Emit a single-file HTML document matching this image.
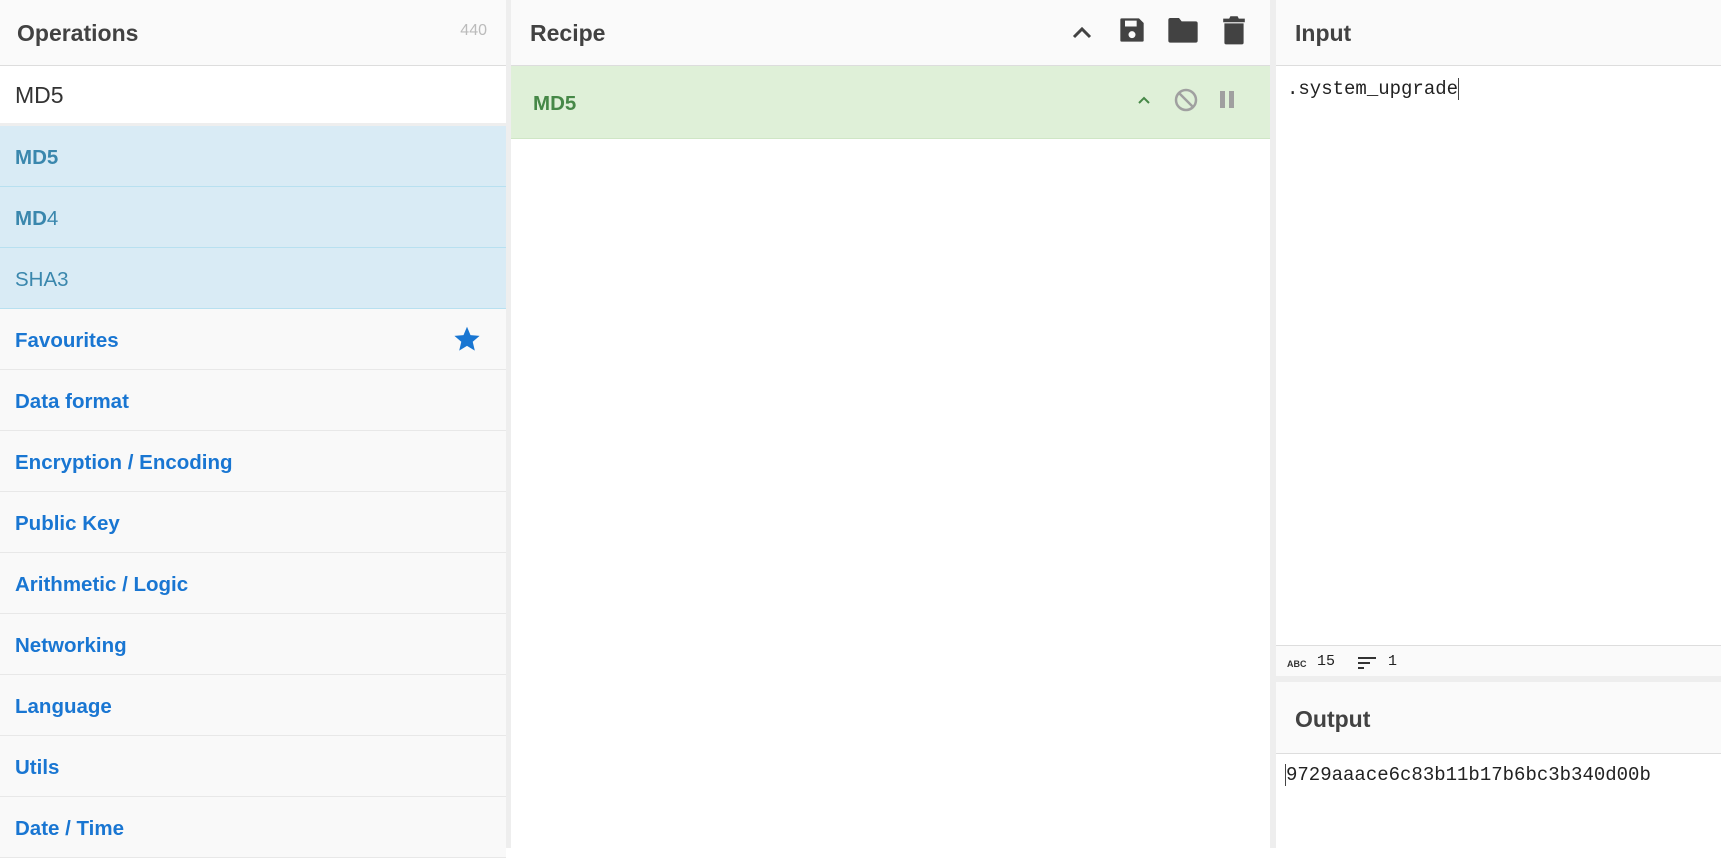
<!DOCTYPE html>
<html><head><meta charset="utf-8"><style>
*{box-sizing:border-box;margin:0;padding:0}
body{width:1721px;height:848px;overflow:hidden;background:#fff;font-family:"Liberation Sans",sans-serif;position:relative}
.abs{position:absolute}
.hdr{background:#fafafa;border-bottom:1px solid #ddd;height:66px}
.htitle{position:absolute;top:20px;font-weight:bold;font-size:23px;color:#424242}
.gut{background:#eee}
.row{position:absolute;left:0;width:506px;height:61px;border-bottom:1px solid #e8e8e8;background:#f9f9f9;font-size:20.5px;font-weight:bold;color:#1976d2;padding:20px 0 0 15px}
.sel{background:#d9ebf5;border-bottom:1px solid #b8e0f0;color:#3a87ad}
.mono{font-family:"Liberation Mono",monospace;font-size:19px;color:#222}
</style></head><body>
<div class="abs hdr" style="left:0;top:0;width:506px"><span class="htitle" style="left:17px">Operations</span><span class="abs" style="right:19px;top:22px;font-size:16px;color:#bbb">440</span></div>
<div class="abs" style="left:0;top:66px;width:506px;height:57px;background:#fff;font-size:23px;color:#333;padding:16px 0 0 15px">MD5</div>
<div class="abs" style="left:0;top:123px;width:506px;height:3px;background:#eee"></div>
<div class="row sel" style="top:126px">MD5</div>
<div class="row sel" style="top:187px">MD<span style="font-weight:normal">4</span></div>
<div class="row sel" style="top:248px;font-weight:normal">SHA3</div>
<div class="row" style="top:309px">Favourites<svg class="abs" style="left:452px;top:16px" width="30" height="28" viewBox="0 0 24 24"><path fill="#1976d2" d="M12 1.5l3 7.2 7.8.6-5.9 5.1 1.8 7.6L12 17.9 5.3 22l1.8-7.6L1.2 9.3 9 8.7z"/></svg></div>
<div class="row" style="top:370px">Data format</div>
<div class="row" style="top:431px">Encryption / Encoding</div>
<div class="row" style="top:492px">Public Key</div>
<div class="row" style="top:553px">Arithmetic / Logic</div>
<div class="row" style="top:614px">Networking</div>
<div class="row" style="top:675px">Language</div>
<div class="row" style="top:736px">Utils</div>
<div class="row" style="top:797px">Date / Time</div>
<div class="abs gut" style="left:506px;top:0;width:5px;height:848px"></div>
<div class="abs hdr" style="left:511px;top:0;width:759px"><span class="htitle" style="left:19px">Recipe</span>
<svg class="abs" style="left:559px;top:24px" width="24" height="16" viewBox="0 0 24 16"><path d="M4 13l8-8 8 8" fill="none" stroke="#424242" stroke-width="3"/></svg>
<svg class="abs" style="left:607px;top:16px" width="28" height="28" viewBox="0 0 24 24"><path fill="#424242" fill-rule="evenodd" d="M3 2h15l4 4v15a1 1 0 0 1-1 1H3a1 1 0 0 1-1-1V3a1 1 0 0 1 1-1zm3 2v5h10V4zm6 9a3 3 0 1 0 0 6 3 3 0 0 0 0-6z"/></svg>
<svg class="abs" style="left:656px;top:16px" width="32" height="28" viewBox="0 0 24 21"><path fill="#424242" d="M1 3a1.5 1.5 0 0 1 1.5-1.5H9l2 2.5h10.5A1.5 1.5 0 0 1 23 5.5v13a1.5 1.5 0 0 1-1.5 1.5h-19A1.5 1.5 0 0 1 1 18.5z"/></svg>
<svg class="abs" style="left:711px;top:15px" width="24" height="30" viewBox="0 0 20 25"><path fill="#424242" d="M1 3h5l1-2h6l1 2h5v3H1zm1 4h16v16a1.5 1.5 0 0 1-1.5 1.5h-13A1.5 1.5 0 0 1 2 23z"/></svg>
</div>
<div class="abs" style="left:511px;top:66px;width:759px;height:73px;background:#dff0d8;border-bottom:1px solid #cfe6c5">
<span class="abs" style="left:22px;top:26px;font-size:20.5px;font-weight:bold;color:#468847">MD5</span>
<svg class="abs" style="left:625px;top:28px" width="16" height="12" viewBox="0 0 16 12"><path d="M3 9l5-5 5 5" fill="none" stroke="#468847" stroke-width="2"/></svg>
<svg class="abs" style="left:662px;top:21px" width="26" height="26" viewBox="0 0 26 26"><circle cx="13" cy="13" r="10" fill="none" stroke="#a0a0a0" stroke-width="2.5"/><path d="M6 6l14 14" stroke="#a0a0a0" stroke-width="2.5"/></svg>
<div class="abs" style="left:709px;top:25px;width:5px;height:17px;background:#a0a0a0"></div><div class="abs" style="left:718px;top:25px;width:5px;height:17px;background:#a0a0a0"></div>
</div>
<div class="abs gut" style="left:1270px;top:0;width:6px;height:848px"></div>
<div class="abs hdr" style="left:1276px;top:0;width:445px"><span class="htitle" style="left:19px">Input</span></div>
<div class="abs mono" style="left:1287px;top:78px">.system_upgrade<span style="display:inline-block;width:1px;height:22px;background:#444;vertical-align:middle"></span></div>
<div class="abs" style="left:1276px;top:645px;width:445px;height:31px;background:#fafafa;border-top:1px solid #ddd"></div>
<span class="abs" style="left:1287px;top:659px;font-size:9px;font-weight:bold;color:#333">ABC</span>
<span class="abs mono" style="left:1317px;top:653px;font-size:15px">15</span>
<svg class="abs" style="left:1358px;top:656px" width="20" height="14" viewBox="0 0 20 14"><path d="M0 2h18M0 7h12M0 12h6" stroke="#333" stroke-width="2"/></svg>
<span class="abs mono" style="left:1388px;top:653px;font-size:15px">1</span>
<div class="abs" style="left:1276px;top:676px;width:445px;height:6px;background:#eee"></div>
<div class="abs" style="left:1276px;top:682px;width:445px;height:72px;background:#fafafa;border-bottom:1px solid #ddd"><span class="htitle" style="left:19px;top:24px">Output</span></div>
<div class="abs mono" style="left:1285px;top:764px"><span style="display:inline-block;width:1px;height:22px;background:#444;vertical-align:middle"></span>9729aaace6c83b11b17b6bc3b340d00b</div>
</body></html>
